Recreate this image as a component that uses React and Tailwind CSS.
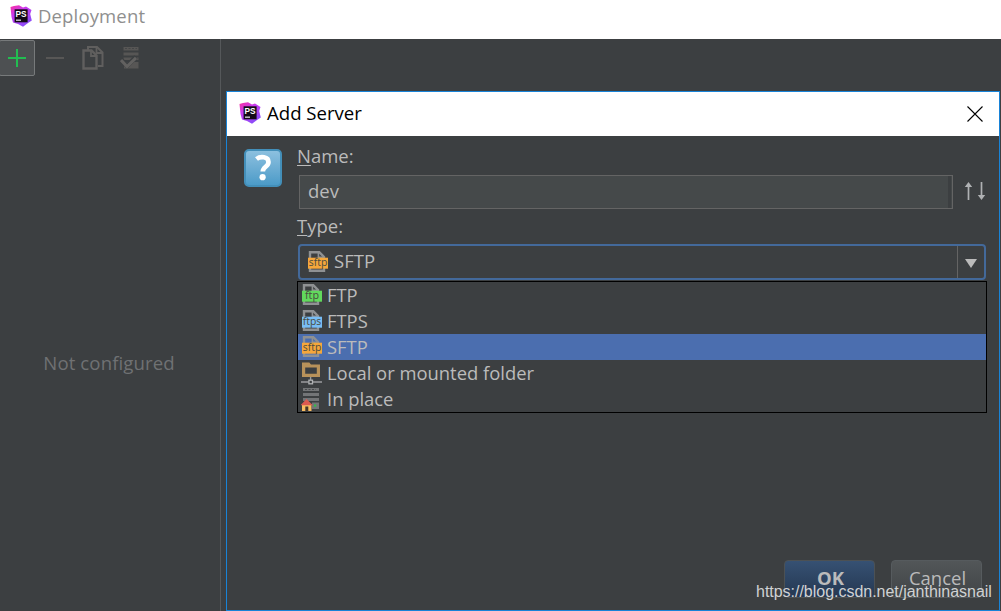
import React from "react";

function PsLogo({ className }) {
  return (
    <svg viewBox="0 0 22 22" className={className} aria-hidden="true">
      <defs>
        <linearGradient id="psg" x1="0" y1="0" x2="0.6" y2="1">
          <stop offset="0" stopColor="#fb2fa0" />
          <stop offset="0.4" stopColor="#c83af0" />
          <stop offset="1" stopColor="#8a4cf8" />
        </linearGradient>
      </defs>
      <path d="M0.5 2 L4 1 L9 0.3 L13 2.5 L16 1.6 L21.5 5 L20.2 9 L21.8 15.5 L18 18 L13 21.8 L8 19 L3 17.5 L1.5 12 Z" fill="url(#psg)" />
      <rect x="4.6" y="4.3" width="13" height="13" fill="#130a16" />
      <text x="5.4" y="12.2" fontSize="8.4" fontWeight="700" fill="#fff" fontFamily="Liberation Sans, sans-serif" textLength="11" lengthAdjust="spacingAndGlyphs">PS</text>
      <rect x="6" y="14.6" width="5" height="1.1" fill="#fff" />
    </svg>
  );
}

function FileIcon({ label, color }) {
  return (
    <svg viewBox="0 0 22 24" className="h-6 w-[22px] shrink-0" aria-hidden="true">
      <path d="M3 20.8 V2.2 H12.3 L17 6.9 V20.8 Z" fill="none" stroke="#8f9193" strokeWidth="2.4" />
      <path d="M11.4 2.5 V7.4 H17" fill="none" stroke="#8f9193" strokeWidth="1.6" />
      <rect x="1" y="7.7" width="20" height="11" fill={color} />
      <text x="11" y="16.3" fontSize="11.5" textAnchor="middle" fill="#4a4b40" fontFamily="Open Sans, sans-serif" fontWeight="500" textLength={label === "ftp" ? 14 : 18.5} lengthAdjust="spacingAndGlyphs">{label}</text>
    </svg>
  );
}

function FolderIcon() {
  return (
    <svg viewBox="0 0 22 24" className="h-6 w-[22px] shrink-0" aria-hidden="true">
      <path fillRule="evenodd" fill="#b8925a" d="M1 1.5 H8.3 L10 3.6 H19 V16 H1 Z M4.2 6.4 V12.8 H15.8 V6.4 Z" />
      <path d="M9.6 16 V19 M-0.5 21 H7.5 M12 21 H21" stroke="#9a9c9e" strokeWidth="1.4" />
      <rect x="7.9" y="19.2" width="3.6" height="3.6" fill="none" stroke="#b0b2b4" strokeWidth="1.3" />
    </svg>
  );
}

function InPlaceIcon() {
  return (
    <svg viewBox="0 0 22 24" className="h-6 w-[22px] shrink-0" aria-hidden="true">
      <path d="M2 1 H18 V4 H2 Z M2 6 H18 V9 H2 Z M2 11 H18 V14 H2 Z M11 15.5 H18 V22 H11 Z" fill="#737577" />
      <path d="M4 2.5 H15" stroke="#4a4c4e" strokeWidth="1.2" strokeDasharray="2 1.5" />
      <rect x="13" y="17.5" width="2.2" height="2.2" fill="#35b84b" />
      <path d="M1 17 H10.5 V24 H1 Z" fill="#f9bd62" />
      <path d="M-0.5 18.3 L5.5 12 L11.8 18.3 Z" fill="#dc5a50" />
      <rect x="4.3" y="19.5" width="3" height="4.5" fill="#42362a" />
    </svg>
  );
}

function Toolbar() {
  return (
    <div className="flex h-[37px] items-start">
      <div className="-ml-px mt-px flex h-9 w-9 items-center justify-center rounded-[2px] border border-[#777a7b] bg-[#4d5052]">
        <svg viewBox="0 0 18 18" className="h-[18px] w-[18px]"><path d="M9 0 V18 M0 9 H18" stroke="#22bd51" strokeWidth="2" /></svg>
      </div>
      <svg viewBox="0 0 18 4" className="ml-[11px] mt-[17px] h-1 w-[18px]"><path d="M0 2 H18" stroke="#585756" strokeWidth="2" /></svg>
      <svg viewBox="0 0 22 24" className="ml-[18px] mt-[7px] h-6 w-[22px]">
        <path d="M6 4 V1 H15 L20.5 6.5 V20 H16" fill="none" stroke="#605f5e" strokeWidth="2" />
        <path d="M1.5 4.5 H9.5 L14.5 9.5 V22.5 H1.5 Z" fill="#3c3f41" stroke="#605f5e" strokeWidth="2.4" />
        <path d="M9 4.5 V10 H14.5 M14.5 1 V7 H20" fill="none" stroke="#605f5e" strokeWidth="1.8" />
      </svg>
      <svg viewBox="0 0 20 24" className="ml-[16px] mt-[7px] h-6 w-5">
        <path d="M3.5 1 H18.5 V4.5 H3.5 Z M3.5 6.5 H18.5 V9.5 H3.5 Z M3.5 11.5 H18.5 V14 H3.5 Z M4 16 H18.5 V22.5 H4 Z" fill="#575655" />
        <path d="M5 2.5 H17" stroke="#454647" strokeWidth="1.2" strokeDasharray="2 1.5" />
        <path d="M1.5 14 L7 19.8 L16 11" fill="none" stroke="#3c3f41" strokeWidth="4.6" />
        <path d="M1 14 L7 20.5 L16 11.8" fill="none" stroke="#626160" strokeWidth="3" />
      </svg>
    </div>
  );
}

const options = [
  { name: "FTP", icon: <FileIcon label="ftp" color="#61d95c" /> },
  { name: "FTPS", icon: <FileIcon label="ftps" color="#78bdf4" /> },
  { name: "SFTP", icon: <FileIcon label="sftp" color="#f5a73b" />, selected: true },
  { name: "Local or mounted folder", icon: <FolderIcon /> },
  { name: "In place", icon: <InPlaceIcon /> },
];

function AddServerDialog() {
  return (
    <section className="absolute left-[226px] top-[91px] flex h-[520px] w-[774px] flex-col border border-[#1883d7] bg-[#3c3f41]">
      <header className="flex h-11 shrink-0 items-center bg-white pl-3 pr-4 text-black">
        <PsLogo className="mb-[3px] h-[22px] w-[22px]" />
        <h2 className="mb-0.5 ml-[6px] text-[18.6px] leading-none">Add Server</h2>
        <svg viewBox="0 0 16 16" className="mb-px ml-auto h-4 w-4"><path d="M0.5 0.5 L15.5 15.5 M15.5 0.5 L0.5 15.5" stroke="#000" strokeWidth="1.1" /></svg>
      </header>
      <div className="flex pl-[17px] pr-3 pt-[11px]">
        <div className="mt-[2px] flex h-[38px] w-[38px] shrink-0 items-center justify-center rounded-[5px] border-2 border-[#438fb9] bg-linear-to-b from-[#8cc0df] to-[#4b9bc8]">
          <svg viewBox="0 0 34 34" className="h-[34px] w-[34px]">
            <path d="M10.5 8 C14.5 4.8 22.5 5.5 22.5 11 C22.5 16 16.8 15.5 16.8 20.5" fill="none" stroke="#fff" strokeWidth="4.7" />
            <circle cx="16.6" cy="26.2" r="3.1" fill="#fff" />
          </svg>
        </div>
        <div className="ml-[15px] flex min-w-0 flex-1 flex-col">
          <label className="h-7 text-[18.5px] leading-[18px]"><span className="underline decoration-1 underline-offset-2">N</span>ame:</label>
          <div className="flex items-center">
            <div className="ml-[2px] flex h-[34px] w-[654px] items-center border border-[#646464] bg-[#45494a] pl-2 pr-px text-[18.5px]">
              <span className="pb-0.5">dev</span>
              <span className="ml-auto h-8 w-[3px] bg-[#3c3f41]" />
            </div>
            <svg viewBox="0 0 22 18" className="mb-0.5 ml-[11px] h-[18px] w-[22px]">
              <path d="M4.5 3 V18 M17.5 0 V15" stroke="#afb1b3" strokeWidth="1.7" />
              <path d="M0.8 5 L4.5 0 L8.2 5 Z M13.8 13 L17.5 18 L21.2 13 Z" fill="#afb1b3" />
            </svg>
          </div>
          <label className="mt-2 h-7 text-[18.5px] leading-[18px]"><span className="underline decoration-1 underline-offset-2">T</span>ype:</label>
          <div className="-mt-px ml-px flex h-9 w-[688px] items-stretch rounded-[4px] border-2 border-[#43699a] pl-[7px]">
            <div className="flex flex-1 items-center text-[18px]">
              <FileIcon label="sftp" color="#f5a73b" />
              <span className="ml-[5px] pb-0.5 text-[18.5px]">SFTP</span>
            </div>
            <div className="flex w-[27px] items-center justify-center border-l border-[#646464]">
              <svg viewBox="0 0 12 9" className="mt-0.5 h-[9px] w-3"><path d="M0 0 H12 L6 9 Z" fill="#bbb" /></svg>
            </div>
          </div>
          <ul className="mt-px w-[690px] border border-black">
            {options.map((o) => (
              <li key={o.name} className={"flex h-[26px] items-center pl-[3px] text-[18.4px] " + (o.selected ? "bg-[#4b6eaf]" : "")}>
                {o.icon}
                <span className="ml-1 whitespace-nowrap pb-px">{o.name}</span>
              </li>
            ))}
          </ul>
        </div>
      </div>
      <footer className="mb-[12px] mt-auto flex justify-end gap-4 pr-[17px] text-[18.5px]">
        <button className="h-[38px] w-[91px] rounded-[4px] border border-[#4c5154] bg-linear-to-b from-[#365173] to-[#253852] pb-0.5 pl-0.5 font-bold">OK</button>
        <button className="h-[38px] w-[91px] rounded-[4px] border border-[#565b5e] bg-linear-to-b from-[#525658] to-[#414547] pb-0.5 pl-0.5">Cancel</button>
      </footer>
    </section>
  );
}

export default function App() {
  return (
    <main className="relative flex h-[611px] w-[1001px] flex-col overflow-hidden bg-[#3c3f41] font-['Open_Sans','Noto_Sans',sans-serif] text-[#bbbbbb]">
      <header className="flex h-[39px] shrink-0 items-start bg-white pl-[10px] pt-[5px] text-[#8f8f8f]">
        <PsLogo className="h-[22px] w-[22px]" />
        <h1 className="ml-[6px] mt-[2px] text-[18.5px] leading-[18px] tracking-[0.15px]">Deployment</h1>
      </header>
      <div className="flex flex-1">
        <aside className="flex w-[221px] flex-col border-r border-[#55585a]">
          <Toolbar />
          <p className="mt-[273px] pr-[2px] text-center text-[18.6px] tracking-[0.1px] text-[#6f7173]">Not configured</p>
        </aside>
      </div>
      <AddServerDialog />
      <span className="absolute left-[756px] top-[582px] whitespace-nowrap font-['Liberation_Sans',sans-serif] text-[16px] leading-5 tracking-[-0.02px] text-[#d0d2d3]">https://blog.csdn.net/janthinasnail</span>
    </main>
  );
}
